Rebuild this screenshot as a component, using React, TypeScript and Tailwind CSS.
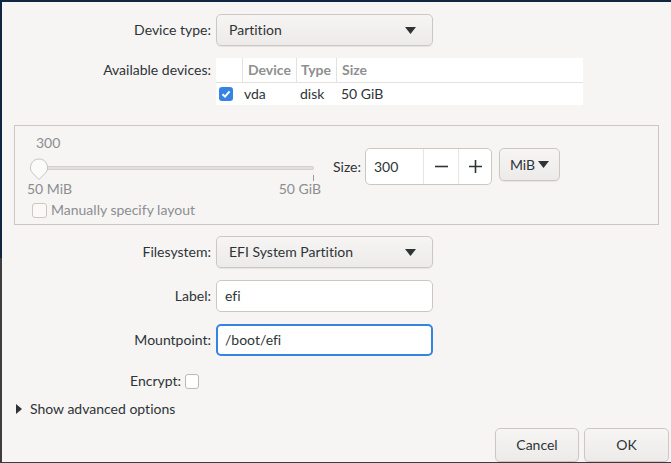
import type { ReactNode } from 'react';

const font = { fontFamily: 'Lato, "Noto Sans", "DejaVu Sans", sans-serif' };

const Arrow = () => (
    <svg width="11" height="7" viewBox="0 0 11 7" className="shrink-0">
        <path d="M0 0 H11 L5.5 7 Z" fill="#2e3436" />
    </svg>
);

const Combo = ({ value }: { value: string }) => (
    <div className="flex h-[32px] w-[217px] items-center justify-between rounded-[5px] border border-[#cdc7c2] bg-gradient-to-b from-[#f6f5f4] to-[#edebe9] pl-[12px] pr-[16px] shadow-[0_1px_1px_rgba(0,0,0,0.07)]">
        <span>{value}</span>
        <Arrow />
    </div>
);

const Entry = ({ value, focused }: { value: string; focused?: boolean }) => (
    <div
        className={
            focused
                ? 'flex h-[32px] w-[217px] items-center rounded-[5px] border-2 border-[#3584e4] bg-white pl-[7px]'
                : 'flex h-[32px] w-[217px] items-center rounded-[5px] border border-[#cdc7c2] bg-white pl-[8px]'
        }
    >
        {value}
    </div>
);

const Row = ({ label, children, className }: { label: string; children: ReactNode; className?: string }) => (
    <div className={`flex items-center ${className ?? ''}`}>
        <div className="w-[211px] text-right">{label}</div>
        <div className="ml-[5px]">{children}</div>
    </div>
);

const Check = ({ checked, disabled }: { checked?: boolean; disabled?: boolean }) =>
    checked ? (
        <div className="flex h-[14px] w-[14px] items-center justify-center rounded-[3px] bg-[#3584e4]">
            <svg width="10" height="10" viewBox="0 0 10 10">
                <path d="M1.5 5.2 L4 7.6 L8.6 2.4" fill="none" stroke="white" strokeWidth="2" />
            </svg>
        </div>
    ) : (
        <div
            className={
                disabled
                    ? 'h-[15px] w-[15px] rounded-[3px] border border-[#cdc7c2] bg-[#faf9f8]'
                    : 'h-[15px] w-[14px] rounded-[3px] border border-[#bfb8b1] bg-white'
            }
        />
    );

export default function App() {
    return (
        <div className="h-[463px] w-[671px] overflow-hidden bg-[#3d3d3d] pl-[2px] pt-[2px] pb-[1px]" style={font}>
            <div className="relative h-full w-full bg-[#f6f5f4] text-[14px] leading-[18px] text-[#2e3436] [font-variant-ligatures:none]">
                <div className="absolute left-[-2px] top-[-2px] h-[2px] w-[673px] bg-[#0e2641]" />
                <div className="absolute left-[-2px] top-[-2px] h-[258px] w-[2px] bg-[#0e2641]" />
                <div className="flex flex-col pt-[12px]">
                    <Row label="Device type:" className="-ml-[2px]">
                        <Combo value="Partition" />
                    </Row>

                    <div className="-ml-[2px] mt-[12px] flex items-start">
                        <div className="w-[211px] pt-[3px] text-right">Available devices:</div>
                        <div className="ml-[5px] w-[367px] bg-white">
                            <div className="flex h-[25px] items-center border-b border-[#e4e1de] font-bold text-[#8f8f8f]">
                                <div className="h-full w-[27px] border-r border-[#e4e1de]" />
                                <div className="flex h-full w-[54px] items-center border-r border-[#e4e1de] pl-[5px]">Device</div>
                                <div className="flex h-full w-[40px] items-center border-r border-[#e4e1de] pl-[4px]">Type</div>
                                <div className="pl-[5px]">Size</div>
                            </div>
                            <div className="flex h-[22px] items-center">
                                <div className="flex w-[27px] pl-[3px]">
                                    <Check checked />
                                </div>
                                <div className="w-[54px] pl-[1px]">vda</div>
                                <div className="w-[40px] pl-[3px]">disk</div>
                                <div className="pl-[4px]">50 GiB</div>
                            </div>
                        </div>
                    </div>

                    <div className="ml-[12px] mt-[20px] flex h-[100px] w-[645px] border border-[#cdc7c2]">
                        <div className="flex w-[306px] flex-col pl-[12px] pt-[8px] text-[#8b8e8f]">
                            <div className="pl-[9px]">300</div>
                            <div className="relative mt-[4px] h-[24px]">
                                <div className="absolute left-[11px] top-[10px] h-[4px] w-[276px] rounded-full border border-[#d3cfcb] bg-[#e3e0dd]" />
                                <svg className="absolute left-[2px] top-[2px]" width="20" height="24" viewBox="0 0 20 24">
                                    <path
                                        d="M10 1 A8.5 8.5 0 0 1 16 15.5 L10 21.5 L4 15.5 A8.5 8.5 0 0 1 10 1 Z"
                                        fill="#fbfbfa"
                                        stroke="#c8c3be"
                                        strokeWidth="1"
                                    />
                                </svg>
                                <div className="absolute left-[286px] top-[19px] h-[6px] w-[1px] bg-[#9a9a9a]" />
                            </div>
                            <div className="flex justify-between">
                                <span>50 MiB</span>
                                <span>50 GiB</span>
                            </div>
                            <div className="mt-[3px] flex items-center gap-[4px] pl-[5px]">
                                <Check disabled />
                                <span>Manually specify layout</span>
                            </div>
                        </div>
                        <div className="ml-[12px] flex items-start pt-[22px]">
                            <div className="flex items-center">
                                <span className="w-[32px]">Size:</span>
                                <div className="flex h-[37px] w-[127px] rounded-[5px] border border-[#cdc7c2] bg-white">
                                    <div className="flex w-[57px] items-center pl-[8px]">300</div>
                                    <div className="flex w-[35px] items-center justify-center border-l border-[#e8e5e2]">
                                        <svg width="15" height="15" viewBox="0 0 15 15">
                                            <path d="M1 7.5 H14" stroke="#2e3436" strokeWidth="1.6" />
                                        </svg>
                                    </div>
                                    <div className="flex flex-1 items-center justify-center border-l border-[#e8e5e2]">
                                        <svg width="15" height="15" viewBox="0 0 15 15">
                                            <path d="M1 7.5 H14 M7.5 1 V14" stroke="#2e3436" strokeWidth="1.6" />
                                        </svg>
                                    </div>
                                </div>
                                <div className="ml-[7px] flex h-[33px] w-[61px] items-center justify-center gap-[3px] self-start rounded-[5px] border border-[#cdc7c2] bg-gradient-to-b from-[#f6f5f4] to-[#edebe9] shadow-[0_1px_1px_rgba(0,0,0,0.07)]">
                                    <span>MiB</span>
                                    <Arrow />
                                </div>
                            </div>
                        </div>
                    </div>

                    <Row label="Filesystem:" className="-ml-[2px] mt-[11px]">
                        <Combo value="EFI System Partition" />
                    </Row>
                    <Row label="Label:" className="-ml-[2px] mt-[12px]">
                        <Entry value="efi" />
                    </Row>
                    <Row label="Mountpoint:" className="-ml-[2px] mt-[12px]">
                        <Entry value="/boot/efi" focused />
                    </Row>

                    <div className="-ml-[2px] mt-[16px] flex items-center">
                        <div className="w-[181px] text-right">Encrypt:</div>
                        <div className="ml-[4px]">
                            <Check />
                        </div>
                    </div>

                    <div className="mt-[10px] flex items-center gap-[8px] pl-[14px]">
                        <svg width="6" height="10" viewBox="0 0 6 10">
                            <path d="M0 0 L6 5 L0 10 Z" fill="#2e3436" />
                        </svg>
                        <span>Show advanced options</span>
                    </div>

                    <div className="mt-[10px] flex justify-end gap-[5px] pr-[2px]">
                        <div className="flex h-[34px] w-[84px] items-center justify-center rounded-[5px] border border-[#cdc7c2] bg-gradient-to-b from-[#f6f5f4] to-[#edebe9] shadow-[0_1px_1px_rgba(0,0,0,0.07)]">
                            Cancel
                        </div>
                        <div className="flex h-[34px] w-[85px] items-center justify-center rounded-[5px] border border-[#cdc7c2] bg-gradient-to-b from-[#f6f5f4] to-[#edebe9] shadow-[0_1px_1px_rgba(0,0,0,0.07)]">
                            OK
                        </div>
                    </div>
                </div>
            </div>
        </div>
    );
}
